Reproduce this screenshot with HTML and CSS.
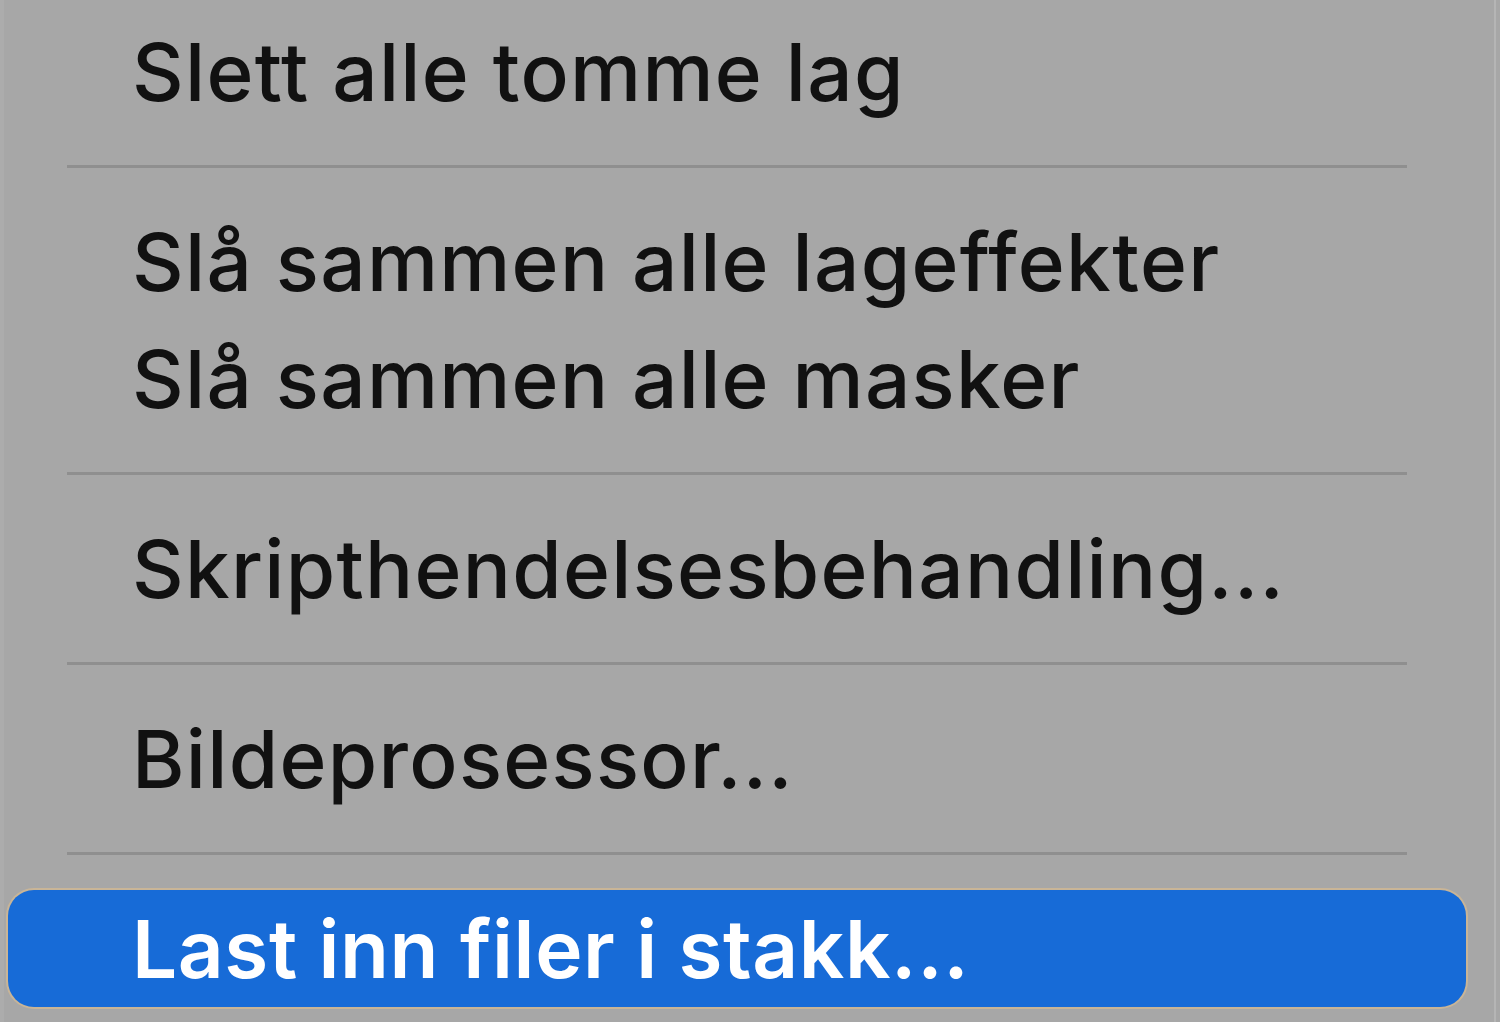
FILE: index.html
```html
<!DOCTYPE html>
<html lang="no">
<head>
  <meta charset="UTF-8" />
  <title>Skript-meny</title>
  <link rel="stylesheet" href="styles.css">
</head>
<body>
  <div class="menu">
    <div class="menu-item">Slett alle tomme lag</div>
    <div class="menu-sep"></div>
    <div class="menu-item">Slå sammen alle lageffekter</div>
    <div class="menu-item">Slå sammen alle masker</div>
    <div class="menu-sep"></div>
    <div class="menu-item">Skripthendelsesbehandling...</div>
    <div class="menu-sep"></div>
    <div class="menu-item">Bildeprosessor...</div>
    <div class="menu-sep"></div>
    <div class="menu-item selected">Last inn filer i stakk...</div>
  </div>
</body>
</html>
```

FILE: styles.css
```css
html, body {
  margin: 0;
  height: 100%;
}
body {
  background: #a7a7a7;
  font-family: Inter, "Noto Sans", "Liberation Sans", sans-serif;
  overflow: hidden;
}
.menu {
  width: 1496px;
  height: 100%;
  padding: 13px 0 0 0;
  box-sizing: border-box;
  border-left: 4px solid #acacac;
  border-right: 2px solid #b5b5b5;
}
.menu-item {
  height: 117px;
  line-height: 117px;
  margin: 0 28px 0 4px;
  padding-left: 124px;
  font-size: 80px;
  font-weight: 500;
  letter-spacing: 1.3px;
  color: #111;
  border-radius: 26px;
  white-space: nowrap;
}
.menu-item.selected {
  background: #176bd7;
  color: #fff;
  font-weight: 600;
  letter-spacing: 0.6px;
  box-shadow: 0 0 0 2px #c9b597;
}
.menu-sep {
  height: 73px;
  display: flex;
  align-items: center;
  margin: 0 87px 0 63px;
}
.menu-sep::before {
  content: "";
  flex: 1;
  height: 3px;
  background: #8f8f8f;
}
```
